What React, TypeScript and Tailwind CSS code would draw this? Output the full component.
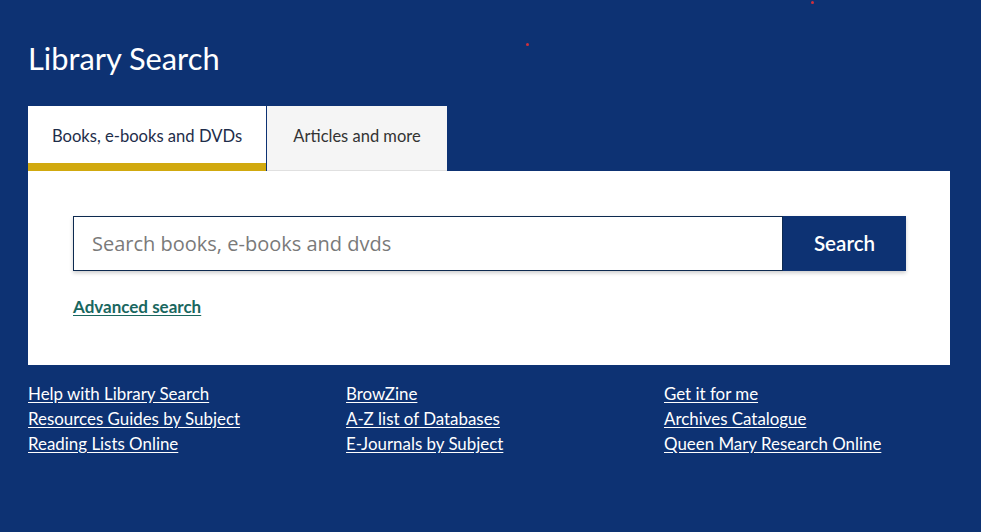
import React from 'react';

const links: string[][] = [
  ['Help with Library Search', 'Resources Guides by Subject', 'Reading Lists Online'],
  ['BrowZine', 'A-Z list of Databases', 'E-Journals by Subject'],
  ['Get it for me', 'Archives Catalogue', 'Queen Mary Research Online'],
];

export default function App() {
  return (
    <div className="relative min-h-[532px] w-[981px] bg-[#0d3273] px-[28px] pt-[40px] font-['Lato','Liberation_Sans',sans-serif]">
      <span className="absolute left-[526px] top-[43px] h-[3px] w-[3px] rounded-full bg-[#d0303c]" />
      <span className="absolute left-[811px] top-[1px] h-[3px] w-[3px] rounded-full bg-[#d0303c]" />

      <h1 className="text-[30.8px] leading-[38px] text-white">Library Search</h1>

      <div className="mt-[28px] flex">
        <button className="flex h-[65px] w-[238px] items-center justify-center border-b-[8px] border-[#d1a90e] bg-white pt-[3px] text-[16.6px] text-[#1e2d4a]">
          Books, e-books and DVDs
        </button>
        <button className="ml-[1px] flex h-[65px] w-[180px] items-center justify-center border-b border-[#e0e0e0] bg-[#f5f5f5] pb-[3px] text-[16.5px] text-[#333]">
          Articles and more
        </button>
      </div>

      <div className="w-[922px] bg-white pl-[45px] pr-[44px] pt-[45px] pb-[45px]">
        <div className="flex h-[55px] shadow-[0_2px_4px_rgba(0,0,0,0.2)]">
          <input
            className="h-full flex-1 border border-[#0d2a50] px-[18px] text-[20px] text-[#333] outline-none placeholder:text-[#7a7a7a] font-['Open_Sans','Liberation_Sans',sans-serif]"
            placeholder="Search books, e-books and dvds"
          />
          <button className="h-full w-[123px] bg-[#0d3273] text-[20.6px] font-semibold text-white">Search</button>
        </div>
        <a href="#" className="mt-[23px] inline-block text-[17px] font-bold text-[#19675f] underline underline-offset-2">
          Advanced search
        </a>
      </div>

      <div className="mt-[16px] grid w-[954px] grid-cols-3">
        {links.map((col, i) => (
          <ul key={i} className="flex flex-col">
            {col.map((l) => (
              <li key={l}>
                <a href="#" className="text-[16.9px] leading-[25px] text-white underline underline-offset-2">
                  {l}
                </a>
              </li>
            ))}
          </ul>
        ))}
      </div>
    </div>
  );
}
